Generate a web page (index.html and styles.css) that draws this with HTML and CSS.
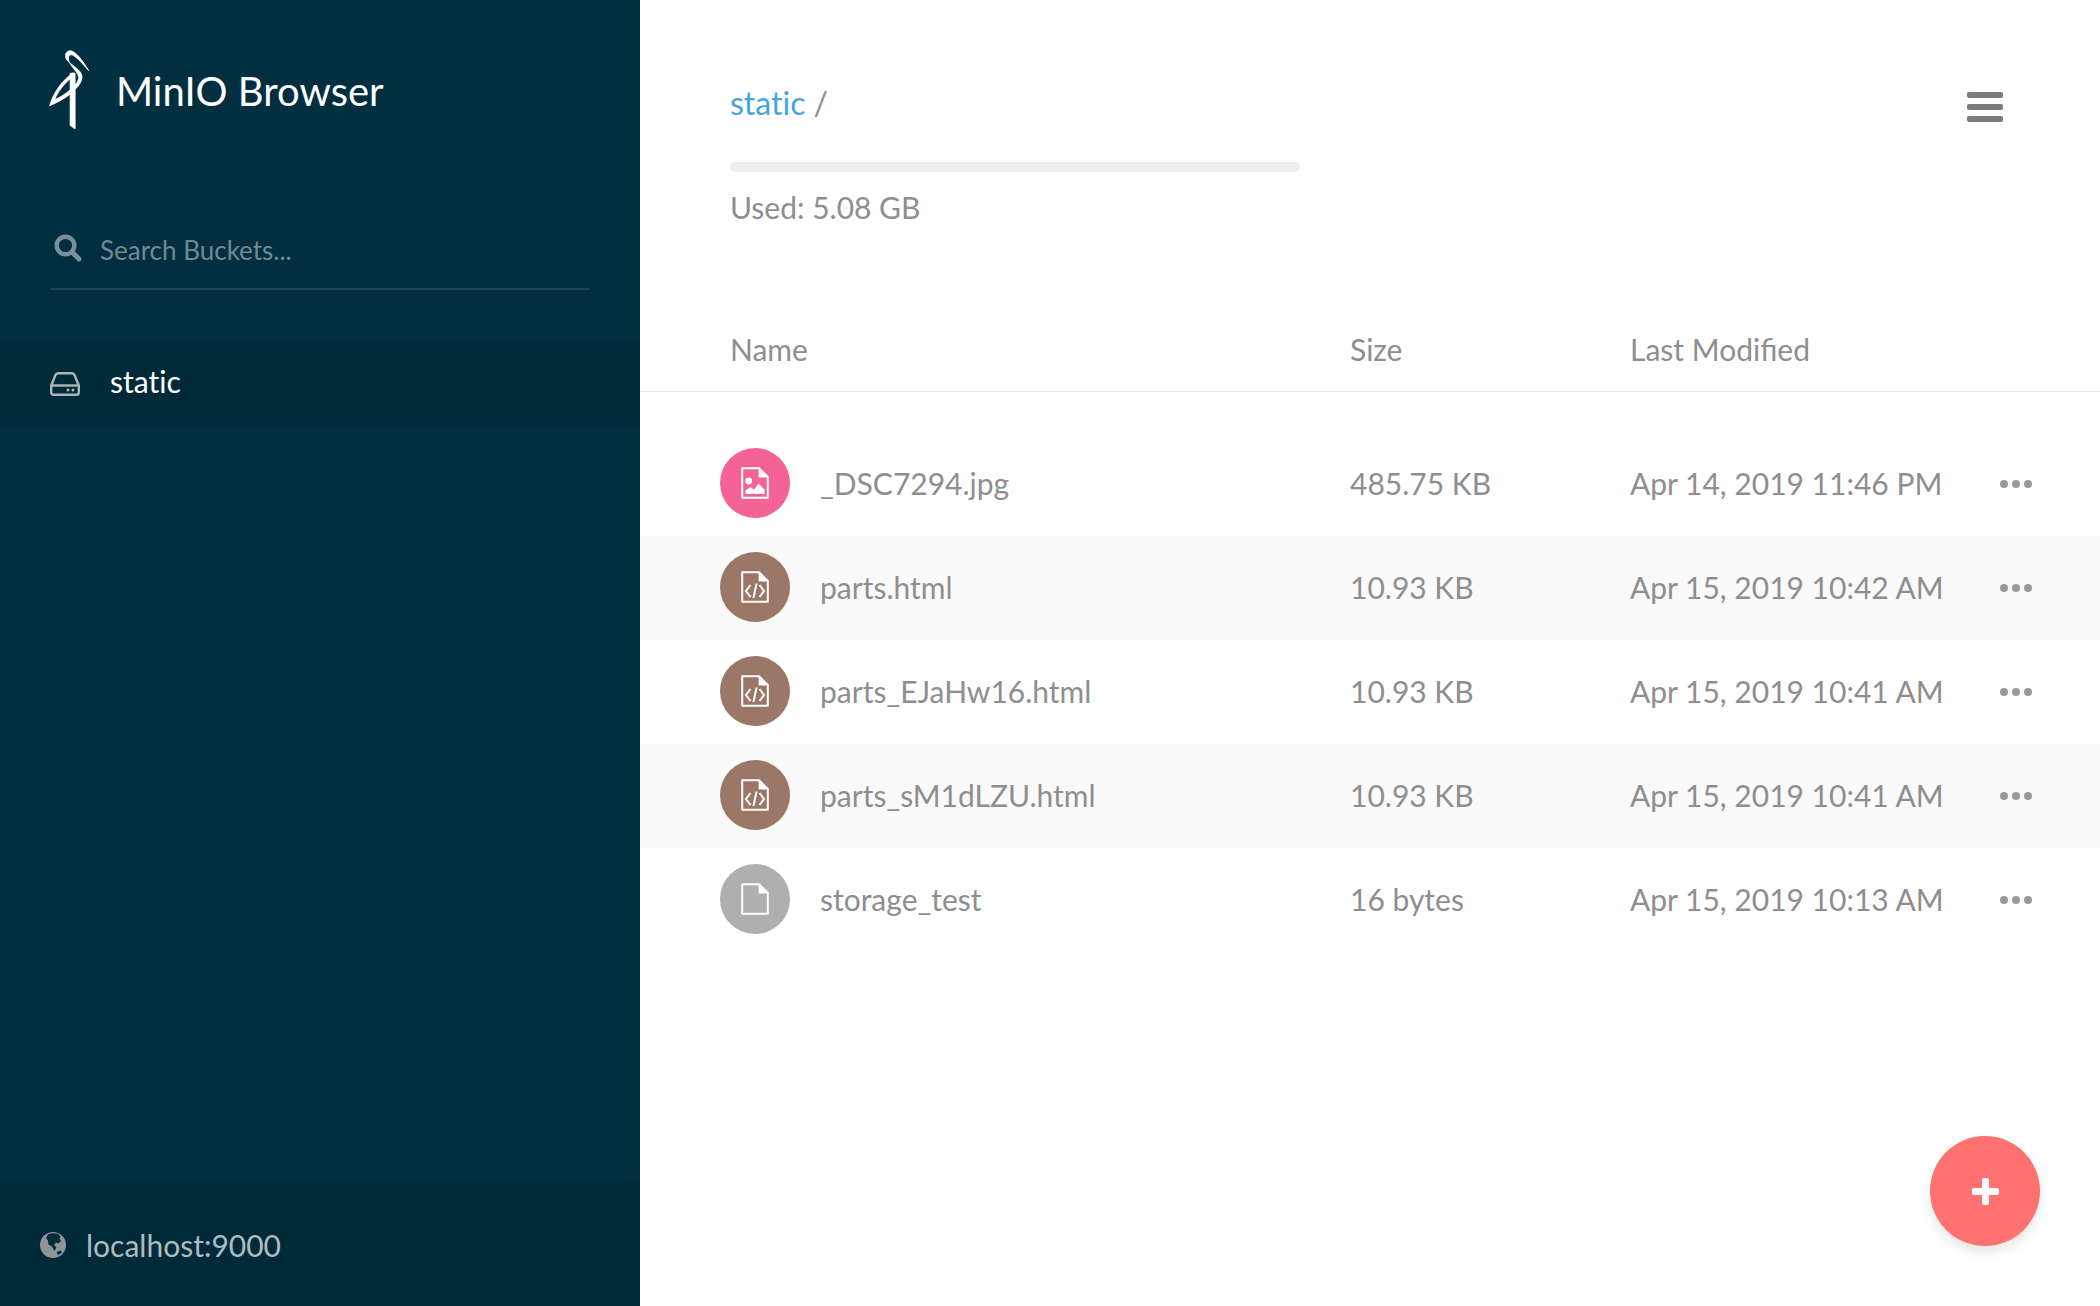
FILE: index.html
```html
<!DOCTYPE html>
<html lang="en">
<head>
  <meta charset="UTF-8">
  <title>MinIO Browser</title>
  <link rel="stylesheet" href="styles.css">
</head>
<body>

<svg class="sprites" width="0" height="0">
  <symbol id="page" viewBox="0 0 28 32">
    <path d="M1.2 1.200H18L26.800 10V30.800H1.200Z" fill="none" stroke="#fff" stroke-width="2" stroke-linejoin="round"/>
    <path d="M17.600 1.200V10.400H26.800Z" fill="#fff"/>
  </symbol>
  <symbol id="code" viewBox="0 0 28 32">
    <path d="M9.500 14L5 20L9.500 26M18.500 14L23 20L18.500 26M15.600 12.500L12.400 27" fill="none" stroke="#fff" stroke-width="2"/>
  </symbol>
</svg>

<div class="app">
  <aside class="sidebar">
    <div class="brand">
      <svg class="logo" viewBox="55 55 130 248" fill="#fff" stroke="#fff" stroke-width="2.500">
        <path d="M178 122C165 100 145 70 128 63C112 58 104 72 110 86C118 102 146 112 156 132C162 148 150 168 137 178V165C146 155 150 145 146 135C138 118 122 108 118 92C114 78 122 70 132 76C148 86 165 108 178 122Z"/>
        <path d="M131 128C100 150 72 185 60 228C85 218 112 202 125 190V178C108 192 92 203 75 210C85 185 105 160 124 145Z"/>
        <path d="M122 130V288L137 298V130Z"/>
      </svg>
      <span class="brand-name">MinIO Browser</span>
    </div>

    <div class="search">
      <svg class="search-icon" viewBox="0 0 28 28" fill="none" stroke="#7a9099">
        <circle cx="11.500" cy="11.500" r="8.800" stroke-width="4.400"/>
        <path d="M18 18L25 25" stroke-width="5" stroke-linecap="round"/>
      </svg>
      <span class="search-text">Search Buckets...</span>
    </div>

    <div class="bucket">
      <svg class="bucket-icon" viewBox="0 0 30 24" fill="none" stroke="#a9b6bb" stroke-width="2.400">
        <path d="M1.200 13.500L5.500 3C6 1.800 6.800 1.200 8 1.200H22C23.200 1.200 24 1.800 24.500 3L28.800 13.500V20.500C28.800 22 28 22.800 26.500 22.800H3.500C2 22.800 1.200 22 1.200 20.500Z" stroke-linejoin="round"/>
        <path d="M1.200 13.500H28.800"/>
        <circle cx="18" cy="18" r="1.500" fill="#a9b6bb" stroke="none"/>
        <circle cx="23" cy="18" r="1.500" fill="#a9b6bb" stroke="none"/>
      </svg>
      <span class="bucket-name">static</span>
    </div>

    <div class="host">
      <svg class="host-icon" viewBox="0 0 26 26">
        <circle cx="13" cy="13" r="13" fill="#8f9497"/>
        <path d="M8 2.500C10 1 15 .8 18 1.800L20.500 4.500L19.500 6.500L21 9L18.500 11.500L16 10.500L14 13L16.500 15.500L14.500 19L12 14.500L8.500 12.500L8 8.500L6 6Z" fill="#022c3a"/>
        <path d="M16.500 20L21 18.500L22 20.500L18 23Z" fill="#022c3a"/>
      </svg>
      <span>localhost:9000</span>
    </div>
  </aside>

  <main class="content">
    <header class="top">
      <div>
        <div class="crumbs"><a class="crumb-link">static</a><span class="crumb-sep">/</span></div>
        <div class="usage-bar"></div>
        <div class="usage-text">Used: 5.08 GB</div>
      </div>
      <div class="menu"><i></i><i></i><i></i></div>
    </header>

    <div class="row-head">
      <div class="col-name">Name</div>
      <div>Size</div>
      <div>Last Modified</div>
    </div>

    <div class="rows">
      <div class="row">
        <div class="file"><span class="file-icon pink">
          <svg class="file-svg" viewBox="0 0 28 32"><use href="#page"/><circle cx="7.700" cy="14" r="3.400" fill="#fff"/><path d="M4.500 27V23.500L9.500 20L13 22.500L17.500 16.500L23.500 22.500V27Z" fill="#fff"/></svg>
        </span>_DSC7294.jpg</div>
        <div>485.75 KB</div>
        <div>Apr 14, 2019 11:46 PM</div>
        <div class="dots"><i></i><i></i><i></i></div>
      </div>
      <div class="row">
        <div class="file"><span class="file-icon brown">
          <svg class="file-svg" viewBox="0 0 28 32"><use href="#page"/><use href="#code"/></svg>
        </span>parts.html</div>
        <div>10.93 KB</div>
        <div>Apr 15, 2019 10:42 AM</div>
        <div class="dots"><i></i><i></i><i></i></div>
      </div>
      <div class="row">
        <div class="file"><span class="file-icon brown">
          <svg class="file-svg" viewBox="0 0 28 32"><use href="#page"/><use href="#code"/></svg>
        </span>parts_EJaHw16.html</div>
        <div>10.93 KB</div>
        <div>Apr 15, 2019 10:41 AM</div>
        <div class="dots"><i></i><i></i><i></i></div>
      </div>
      <div class="row">
        <div class="file"><span class="file-icon brown">
          <svg class="file-svg" viewBox="0 0 28 32"><use href="#page"/><use href="#code"/></svg>
        </span>parts_sM1dLZU.html</div>
        <div>10.93 KB</div>
        <div>Apr 15, 2019 10:41 AM</div>
        <div class="dots"><i></i><i></i><i></i></div>
      </div>
      <div class="row">
        <div class="file"><span class="file-icon grey">
          <svg class="file-svg" viewBox="0 0 28 32"><use href="#page"/></svg>
        </span>storage_test</div>
        <div>16 bytes</div>
        <div>Apr 15, 2019 10:13 AM</div>
        <div class="dots"><i></i><i></i><i></i></div>
      </div>
    </div>

    <button class="fab"><span class="plus"></span></button>
  </main>
</div>

</body>
</html>
```
FILE: styles.css
```css
html, body {
  margin: 0;
  height: 100%;
  overflow: hidden;
}
body {
  font-family: Lato, "Open Sans", sans-serif;
  font-size: 30px;
  color: #8e8e8e;
  background: #fff;
}
.sprites {
  position: absolute;
}
.app {
  display: flex;
  height: 1306px;
}

/* sidebar */
.sidebar {
  width: 640px;
  flex: none;
  display: flex;
  flex-direction: column;
  background: #012f40;
}
.brand {
  display: flex;
  align-items: center;
  height: 83px;
  padding: 48px 0 0 48px;
}
.logo {
  width: 43px;
  height: 83px;
}
.brand-name {
  margin-left: 25px;
  margin-top: 3px;
  font-size: 40px;
  color: #fff;
}
.search {
  display: flex;
  align-items: center;
  height: 68px;
  margin: 89px 50px 0;
  padding: 0 0 0 4px;
  border-bottom: 2px solid #1d4453;
}
.search-icon {
  width: 28px;
  height: 28px;
  margin-bottom: 12px;
}
.search-text {
  margin: 0 0 8px 18px;
  font-size: 26px;
  color: #6f8a94;
}
.bucket {
  display: flex;
  align-items: center;
  height: 88px;
  margin-top: 50px;
  padding-left: 50px;
  color: #fff;
  background: #012a38;
}
.bucket-icon {
  width: 30px;
  height: 24px;
  margin-right: 30px;
  flex: none;
}
.bucket-name {
  margin-bottom: 7px;
  font-variant-ligatures: none;
}
.host {
  display: flex;
  align-items: center;
  height: 123px;
  margin-top: auto;
  padding-left: 40px;
  color: #aebcc2;
  background: #012a38;
}
.host-icon {
  width: 26px;
  height: 26px;
  margin-right: 20px;
  flex: none;
}

/* main */
.content {
  flex: 1;
  position: relative;
}
.top {
  display: flex;
  justify-content: space-between;
  height: 327px;
  padding: 0 97px 0 90px;
}
.crumbs {
  margin-top: 85px;
  font-size: 32px;
  line-height: 36px;
  font-variant-ligatures: none;
}
.crumb-link {
  color: #46a5e0;
}
.crumb-sep {
  margin-left: 8px;
}
.usage-bar {
  width: 570px;
  height: 10px;
  margin-top: 41px;
  border-radius: 5px;
  background: #eeeeee;
}
.usage-text {
  margin-top: 17px;
  line-height: 36px;
}
.menu {
  display: flex;
  flex-direction: column;
  gap: 6px;
  margin-top: 92px;
}
.menu i {
  display: block;
  width: 36px;
  height: 6px;
  border-radius: 2px;
  background: #7b7b7b;
}
.row-head {
  display: grid;
  grid-template-columns: 620px 280px 1fr;
  height: 64px;
  padding-left: 90px;
  border-bottom: 1px solid #e6e6e6;
  line-height: 44px;
}
.rows {
  margin-top: 40px;
}
.row {
  display: grid;
  grid-template-columns: 710px 280px 370px 1fr;
  align-items: center;
  box-sizing: border-box;
  height: 104px;
  padding-bottom: 2px;
}
.row:nth-child(even) {
  background: #fafafa;
}
.file {
  display: flex;
  align-items: center;
  padding-left: 80px;
}
.file-icon {
  display: flex;
  align-items: center;
  justify-content: center;
  width: 70px;
  height: 70px;
  margin-right: 30px;
  border-radius: 50%;
}
.file-svg {
  width: 28px;
  height: 32px;
}
.pink { background: #f46296; }
.brown { background: #9a7767; }
.grey { background: #afafaf; }
.dots {
  display: flex;
  gap: 4px;
  margin-top: 2px;
}
.dots i {
  display: block;
  width: 8px;
  height: 8px;
  border-radius: 50%;
  background: #999;
}
.fab {
  position: absolute;
  left: 1290px;
  top: 1136px;
  display: flex;
  align-items: center;
  justify-content: center;
  width: 110px;
  height: 110px;
  padding: 0;
  border: none;
  border-radius: 50%;
  background: #ff726f;
  box-shadow: 0 6px 12px rgba(0,0,0,0.1);
}
.plus {
  position: relative;
  display: block;
  width: 27px;
  height: 7px;
  border-radius: 2px;
  background: #fff;
}
.plus::after {
  content: "";
  position: absolute;
  left: 10px;
  top: -10px;
  width: 7px;
  height: 27px;
  border-radius: 2px;
  background: #fff;
}
```
